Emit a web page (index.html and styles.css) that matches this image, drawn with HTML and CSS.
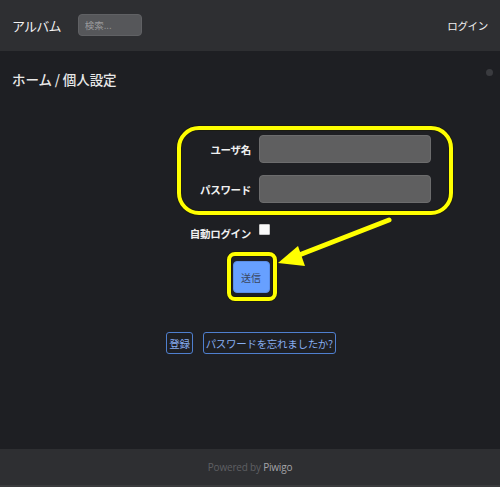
FILE: index.html
```html
<!DOCTYPE html>
<html lang="ja">
<head>
<meta charset="utf-8">
<title>アルバム</title>
<link rel="stylesheet" href="styles.css">
</head>
<body>
<header class="topbar">
  <div class="brand">アルバム</div>
  <input class="search" type="text" placeholder="検索...">
  <div class="spacer"></div>
  <a class="login-link">ログイン</a>
</header>
<main class="content">
  <div class="scroll-dot"></div>
  <h2 class="crumbs">ホーム / 個人設定</h2>
  <div class="form">
    <label class="lbl">ユーザ名</label>
    <input class="field" type="text">
    <label class="lbl">パスワード</label>
    <input class="field" type="password">
  </div>
  <div class="auto">
    <label class="lbl">自動ログイン</label>
    <input class="check" type="checkbox">
  </div>
  <div class="submit-row">
    <button class="submit">送信</button>
  </div>
  <div class="links">
    <a class="link-btn">登録</a>
    <a class="link-btn">パスワードを忘れましたか?</a>
  </div>
</main>
<footer class="foot">
  <span class="pow">Powered by</span>&nbsp;<span class="piwigo">Piwigo</span>
</footer>
<svg class="annot" width="500" height="487" viewBox="0 0 500 487">
  <g fill="none" stroke="#1a1a00" stroke-width="6" opacity="0.5">
    <rect x="179" y="128" width="272" height="85" rx="20"/>
    <rect x="229" y="254" width="46" height="45" rx="6"/>
  </g>
  <g fill="none" stroke="#ffff00" stroke-width="4">
    <rect x="179" y="128" width="272" height="85" rx="20"/>
    <rect x="229" y="254" width="46" height="45" rx="6"/>
  </g>
  <line x1="389" y1="220" x2="294" y2="257" stroke="#ffff00" stroke-width="5" stroke-linecap="round"/>
  <polygon points="278,263 298,246 305,266" fill="#ffff00"/>
</svg>
</body>
</html>
```
FILE: styles.css
```css
html, body {
  margin: 0;
  padding: 0;
}
body {
  width: 500px;
  height: 487px;
  background: #1e1f23;
  color: #e6e6e6;
  font-family: "Noto Sans CJK JP", "Noto Sans", sans-serif;
  position: relative;
  overflow: hidden;
}
.topbar {
  height: 51px;
  background: #2e2f32;
  display: flex;
  align-items: center;
  padding: 0 12px;
  box-sizing: border-box;
}
.brand {
  font-size: 13px;
  color: #f2f2f2;
  letter-spacing: -0.8px;
  margin-top: -1px;
}
.search {
  margin-left: 17px;
  width: 64px;
  height: 22px;
  box-sizing: border-box;
  background: #56575a;
  border: 1px solid #606164;
  border-radius: 4px;
  padding: 0 6px;
  font-family: inherit;
  font-size: 9.5px;
  color: #ddd;
  outline: none;
  margin-top: -1px;
}
.search::placeholder {
  color: #9a9a9c;
}
.spacer {
  flex: 1;
}
.login-link {
  font-size: 10.5px;
  color: #f0f0f0;
  letter-spacing: -0.3px;
}
.content {
  height: 398px;
  position: relative;
  display: flex;
  flex-direction: column;
}
.scroll-dot {
  position: absolute;
  right: 7px;
  top: 18px;
  width: 7px;
  height: 7px;
  border-radius: 50%;
  background: #3a3b3f;
}
.crumbs {
  margin: 18px 0 0 12px;
  font-size: 13.5px;
  line-height: 20px;
  font-weight: 500;
  color: #e8e8e8;
  letter-spacing: -0.1px;
}
.form {
  margin: 46px 0 0 160px;
  display: grid;
  grid-template-columns: 91px 172px;
  column-gap: 8px;
  row-gap: 12px;
  align-items: center;
}
.lbl {
  justify-self: end;
  font-size: 10.5px;
  font-weight: 700;
  color: #f0f0f0;
  letter-spacing: -0.3px;
}
.field {
  height: 28px;
  box-sizing: border-box;
  background: #5f5f60;
  border: 1px solid #6c6c6d;
  border-radius: 4px;
  margin: 0;
  outline: none;
}
.auto {
  margin: 20px 0 0 160px;
  width: 110px;
  display: grid;
  grid-template-columns: 91px 11px;
  column-gap: 8px;
  align-items: start;
  height: 16px;
}
.auto .lbl {
  margin-top: 3px;
}
.check {
  -webkit-appearance: none;
  appearance: none;
  width: 11px;
  height: 11px;
  margin: 1px 0 0 0;
  background: #fafafa;
  border: 1px solid #c8c8c8;
  border-radius: 1px;
  box-sizing: border-box;
}
.submit-row {
  margin-top: 22px;
  display: flex;
  justify-content: center;
  padding-left: 2px;
}
.submit {
  width: 37px;
  height: 32px;
  background: #67a0ff;
  border: 1px solid #5b8ee6;
  border-radius: 4px;
  font-family: inherit;
  font-size: 10px;
  color: #3a465c;
  padding: 0;
}
.links {
  margin-top: 39px;
  display: flex;
  justify-content: center;
  gap: 10px;
  padding-left: 2px;
}
.link-btn {
  height: 22px;
  box-sizing: border-box;
  display: flex;
  align-items: center;
  padding: 0 2px;
  border: 1px solid #4f7fcf;
  border-radius: 3px;
  font-size: 10.5px;
  color: #86adf0;
  letter-spacing: -0.3px;
}
.foot {
  height: 38px;
  background: #2e2f32;
  display: flex;
  align-items: center;
  justify-content: center;
  font-family: "Open Sans", sans-serif;
  font-size: 10px;
  letter-spacing: -0.2px;
  border-bottom: 2px solid #3a3b3d;
  box-sizing: border-box;
}
.pow {
  color: #5e5f63;
}
.piwigo {
  color: #a4a4a8;
}
.annot {
  position: absolute;
  left: 0;
  top: 0;
  pointer-events: none;
}
```
